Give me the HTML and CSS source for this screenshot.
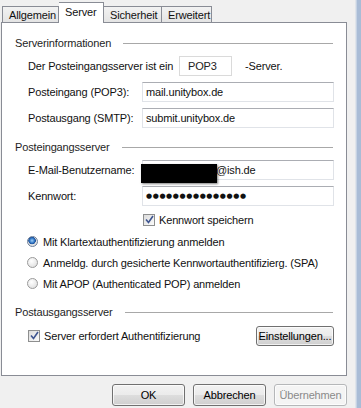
FILE: index.html
```html
<!DOCTYPE html>
<html lang="de">
<head>
  <meta charset="UTF-8">
  <title>Kontoeigenschaften - Server</title>
  <link rel="stylesheet" href="styles.css">
</head>
<body>
  <div class="window">
    <div class="dialog">
      <!-- Reiter -->
      <div class="tabs">
        <div class="tab">Allgemein</div>
        <div class="tab active">Server</div>
        <div class="tab">Sicherheit</div>
        <div class="tab">Erweitert</div>
      </div>

      <div class="panel">
        <!-- Serverinformationen -->
        <div class="group-title first"><span>Serverinformationen</span><span class="rule"></span></div>
        <div class="row">
          <span class="label wide">Der Posteingangsserver ist ein</span>
          <span class="field short">POP3</span>
          <span class="suffix">-Server.</span>
        </div>
        <div class="row">
          <span class="label">Posteingang (POP3):</span>
          <span class="field">mail.unitybox.de</span>
        </div>
        <div class="row">
          <span class="label">Postausgang (SMTP):</span>
          <span class="field">submit.unitybox.de</span>
        </div>

        <!-- Posteingangsserver -->
        <div class="group-title"><span>Posteingangsserver</span><span class="rule"></span></div>
        <div class="row tight">
          <span class="label">E-Mail-Benutzername:</span>
          <span class="field user"><span class="redact"></span>@ish.de</span>
        </div>
        <div class="row">
          <span class="label">Kennwort:</span>
          <span class="field dots">●●●●●●●●●●●●●●●</span>
        </div>
        <div class="option indent">
          <span class="check"><svg width="9" height="9" viewBox="0 0 9 9"><path d="M1 4.5 L3.5 7.5 L8 1" fill="none" stroke="#3d5490" stroke-width="1.6"/></svg></span>
          Kennwort speichern
        </div>
        <div class="option radio-row first-radio"><span class="radio on"></span>Mit Klartextauthentifizierung anmelden</div>
        <div class="option radio-row"><span class="radio"></span>Anmeldg. durch gesicherte Kennwortauthentifizierg. (SPA)</div>
        <div class="option radio-row"><span class="radio"></span>Mit APOP (Authenticated POP) anmelden</div>

        <!-- Postausgangsserver -->
        <div class="group-title late"><span>Postausgangsserver</span><span class="rule"></span></div>
        <div class="row outgoing">
          <span class="option">
            <span class="check"><svg width="9" height="9" viewBox="0 0 9 9"><path d="M1 4.5 L3.5 7.5 L8 1" fill="none" stroke="#3d5490" stroke-width="1.6"/></svg></span>
            Server erfordert Authentifizierung
          </span>
          <button class="btn settings">Einstellungen...</button>
        </div>
      </div>

      <!-- Schaltflächen -->
      <div class="actions">
        <button class="btn">OK</button>
        <button class="btn">Abbrechen</button>
        <button class="btn" disabled>Übernehmen</button>
      </div>
    </div>
    <div class="frame"></div>
  </div>
</body>
</html>
```

FILE: styles.css
```css
* {
  box-sizing: border-box;
  margin: 0;
  padding: 0;
}
body {
  background: #f0f0f0;
  font-family: "Liberation Sans", Arial, sans-serif;
  font-size: 11px;
  letter-spacing: -0.15px;
  color: #111;
}
.window {
  display: flex;
  height: 408px;
  overflow: hidden;
}
.dialog {
  width: 355px;
  padding-left: 1px;
  padding-right: 8px;
}
.frame {
  flex: 1;
  background: linear-gradient(to right, #dfe4ea 0 1px, #c6d3e4 1px 2px, #a9bcd6 2px);
}
/* Reiter */
.tabs {
  display: flex;
  align-items: flex-end;
  height: 22px;
  padding-left: 1px;
}
.tab {
  height: 16px;
  padding: 1px 6px 0;
  border: 1px solid #898c95;
  border-bottom: none;
  border-left: none;
  background: linear-gradient(#f2f2f2, #e4e4e4);
  line-height: 14px;
}
.tab:first-child {
  border-left: 1px solid #898c95;
  width: 57px;
}
.tab.active {
  position: relative;
  z-index: 1;
  height: 21px;
  margin-bottom: -1px;
  padding-top: 2px;
  background: #fff;
  width: 45px;
}
.tab:nth-child(3) { width: 58px; }
.tab:nth-child(4) { width: 50px; }
/* Register */
.panel {
  height: 354px;
  border: 1px solid #898c95;
  background: #fff;
  padding: 0 12px 0 13px;
}
.group-title {
  display: flex;
  align-items: center;
  height: 14px;
  margin-top: 12px;
  color: #1e1e1e;
}
.group-title.first { margin-top: 13px; }
.group-title.late { margin-top: 15px; }
.group-title .rule {
  flex: 1;
  margin-left: 12px;
  margin-right: 1px;
  border-top: 1px solid #a8a8a8;
}
.row {
  display: flex;
  align-items: center;
  height: 20px;
  margin-top: 6px;
  padding-left: 13px;
}
.label {
  width: 114px;
  flex-shrink: 0;
}
.label.wide { width: 151px; }
.field {
  position: relative;
  flex: 1;
  height: 20px;
  padding-left: 3px;
  line-height: 18px;
  border: 1px solid #e0e3e8;
  border-top-color: #abadb3;
  background: #fff;
}
.field.short {
  flex: none;
  width: 53px;
  padding-left: 8px;
  border-color: #dadada;
  color: #222;
}
.suffix { margin-left: 13px; }
.field.user { padding-left: 73px; }
.redact {
  position: absolute;
  left: -2px;
  top: 3px;
  width: 76px;
  height: 19px;
  background: #000;
  box-shadow: 1px 1px 2px rgba(0, 0, 0, 0.5);
}
.field.dots {
  font-family: "DejaVu Sans", sans-serif;
  font-size: 7px;
  letter-spacing: 0.6px;
  line-height: 18px;
  padding-left: 3px;
}
.option {
  display: flex;
  align-items: center;
  height: 13px;
}
.option.indent {
  margin-top: 7px;
  padding-left: 128px;
}
.radio-row {
  margin-top: 8px;
  padding-left: 12px;
}
.radio-row.first-radio { margin-top: 9px; }
.check {
  display: inline-flex;
  align-items: center;
  justify-content: center;
  width: 12px;
  height: 12px;
  margin-right: 4px;
  border: 1px solid #8e8f8f;
  background: linear-gradient(135deg, #dcdcdc, #fbfbfb);
}
.radio {
  display: inline-block;
  width: 11px;
  height: 11px;
  margin-right: 5px;
  border: 1px solid #9a9a9a;
  border-radius: 50%;
  background: radial-gradient(circle at 40% 35%, #fff, #d9d9d9);
}
.radio.on {
  border-color: #6e7f99;
  background: radial-gradient(circle at 45% 40%, #9fd0f5 0, #2e73c4 2.5px, #1e4f93 3.5px, #e8e8e8 4px, #cfcfcf);
}
.row.outgoing {
  justify-content: space-between;
  height: 21px;
  margin-top: 6px;
  padding-right: 0;
}
/* Schaltflächen */
.btn {
  height: 22px;
  width: 73px;
  font-family: inherit;
  font-size: 11px;
  letter-spacing: -0.15px;
  color: #000;
  border: 1px solid #707070;
  border-radius: 3px;
  background: linear-gradient(#f2f2f2 0%, #ebebeb 50%, #dddddd 51%, #cfcfcf 100%);
  box-shadow: inset 0 0 0 1px rgba(255, 255, 255, 0.7);
}
.btn.settings {
  width: 78px;
  height: 20px;
}
.btn:disabled {
  color: #8a8a8a;
  border-color: #b5b7b9;
  background: #f4f4f4;
}
.actions {
  display: flex;
  justify-content: flex-end;
  gap: 8px;
  margin-top: 8px;
  padding-right: 0;
}
```
